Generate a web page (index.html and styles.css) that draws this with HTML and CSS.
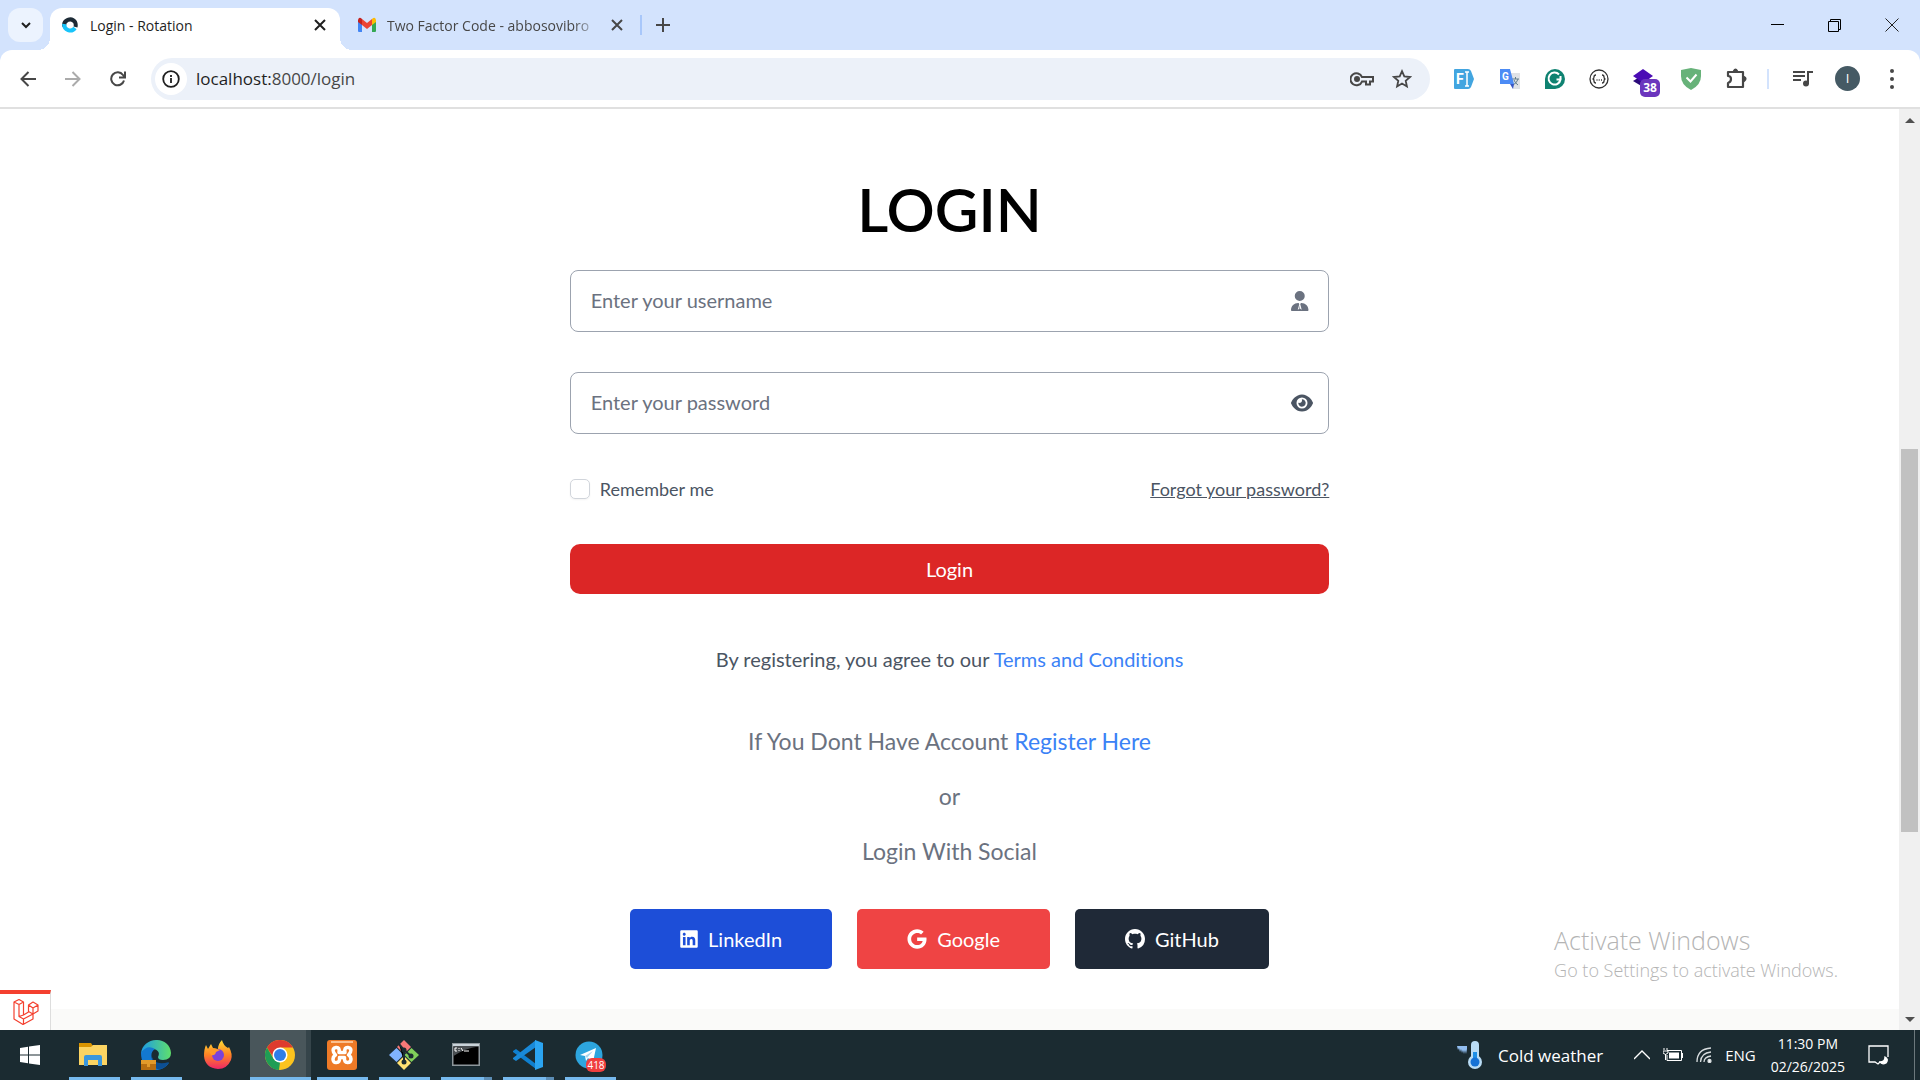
FILE: index.html
```
<!DOCTYPE html>
<html lang="en">
<head>
    <meta charset="UTF-8">
    <meta name="viewport" content="width=device-width, initial-scale=1.0">
    <title>Login - Rotation</title>
    <link rel="stylesheet" href="styles.css">
</head>
<body>
    <header class="browser">
        <div class="tab-strip">
            <button class="tab-search" aria-label="Search tabs">
                <svg width="12" height="12" viewBox="0 0 12 12" fill="none" stroke="#1f1f1f" stroke-width="2"><path d="M2 4l4 4 4-4"/></svg>
            </button>
            <div class="tab active">
                <svg width="16" height="16" viewBox="0 0 16 16" fill="none" stroke-width="4"><path d="M2.200 9.500A6 6 0 0 1 13 5c1 2 1 3 .5 5" stroke="#1d2b36"/><path d="M2.200 7A6 6 0 0 0 13 11" stroke="#18c4fa"/></svg>
                <span class="tab-title">Login - Rotation</span>
                <button class="tab-close" aria-label="Close tab">
                    <svg width="12" height="12" viewBox="0 0 12 12" stroke="#1f1f1f" stroke-width="2"><path d="M1 1l10 10M11 1L1 11"/></svg>
                </button>
            </div>
            <div class="tab">
                <svg width="20" height="16" viewBox="0 0 20 16"><path fill="#4285f4" d="M1 4v10q0 1 1 1h3V6z"/><path fill="#34a853" d="M15 6v9h3q1 0 1-1V4z"/><path fill="#ea4335" d="M5 2l5 4 5-4v6l-5 4-5-4z"/><path fill="#c5221f" d="M1 3q1-4 4-1v6L1 5z"/><path fill="#fbbc04" d="M19 3q-1-4-4-1v6l4-3z"/></svg>
                <span class="tab-title faded">Two Factor Code - abbosovibro</span>
                <button class="tab-close" aria-label="Close tab">
                    <svg width="12" height="12" viewBox="0 0 12 12" stroke="#474747" stroke-width="2"><path d="M1 1l10 10M11 1L1 11"/></svg>
                </button>
            </div>
            <span class="divider"></span>
            <button class="new-tab" aria-label="New tab">
                <svg width="14" height="14" viewBox="0 0 14 14" stroke="#474747" stroke-width="2"><path d="M7 0v14M0 7h14"/></svg>
            </button>
            <div class="window-controls">
                <button aria-label="Minimize"><svg width="13" height="14" viewBox="0 0 13 14" stroke="#000"><path d="M0 6.500h13"/></svg></button>
                <button aria-label="Restore"><svg width="14" height="14" viewBox="0 0 14 14" fill="none" stroke="#000"><path d="M.5 3.500h10v10H.5zM2.500 3.500v-2h10v10h-2"/></svg></button>
                <button aria-label="Close"><svg width="14" height="14" viewBox="0 0 14 14" stroke="#222"><path d="M.5.5l13 13M13.500.5l-13 13"/></svg></button>
            </div>
        </div>
        <div class="toolbar">
            <div class="nav-buttons">
                <button aria-label="Back"><svg width="16" height="16" viewBox="0 0 16 16" fill="none" stroke="#474747" stroke-width="2"><path d="M16 8H2M8.500 1L1.500 8l7 7"/></svg></button>
                <button aria-label="Forward"><svg width="16" height="16" viewBox="0 0 16 16" fill="none" stroke="#ababab" stroke-width="2"><path d="M0 8h14M7.500 1l7 7-7 7"/></svg></button>
                <button aria-label="Reload"><svg width="16" height="16" viewBox="0 0 16 16" fill="none" stroke="#474747" stroke-width="2"><path d="M14 9.500A6.500 6.500 0 1 1 13 4l1.500 2M15 .5v6H9"/></svg></button>
            </div>
            <div class="address-bar">
                <span class="site-info"><svg width="18" height="18" viewBox="0 0 18 18" fill="none" stroke="#1f1f1f" stroke-width="1.800"><circle cx="9" cy="9" r="7.800"/><path d="M9 8v5M9 5v2"/></svg></span>
                <p class="url">localhost:<span>8000/login</span></p>
                <svg width="24" height="16" viewBox="0 0 24 16" fill="none" stroke="#474747" stroke-width="2"><path d="M12 6a6 6 0 1 0 0 4.500h4v3h4v-3h3V6z"/><circle cx="7" cy="8" r="2" fill="#474747"/></svg>
                <svg width="20" height="20" viewBox="0 0 20 20" fill="none" stroke="#474747" stroke-width="1.800"><path d="M10 2.200l2.300 5.200 5.700.6-4.300 3.800 1.200 5.600-4.900-2.900-4.900 2.900 1.200-5.600L2 8l5.700-.6z"/></svg>
            </div>
            <div class="extensions">
                <svg width="22" height="22" viewBox="0 0 22 22"><path fill="#42a5e0" d="M2 1h13q2 0 3 2l3 8-3 8q-1 2-3 2H2q-1 0-1-1V2q0-1 1-1z"/><text x="3" y="16" class="glyph g14">F</text><path d="M12 4h4M12 18h4M14 4v14" stroke="#fff" stroke-width="1.500"/></svg>
                <svg width="22" height="22" viewBox="0 0 22 22"><path fill="#e0e2e6" d="M9 5h12v16H14z"/><path d="M13 11h7M16.500 9v2M19 11q-1 4-5 6M15 12q1 3 4 5" stroke="#607d8b" fill="none"/><path fill="#4c8bf5" d="M1 1h10l4 15H1z"/><path fill="#3a57c4" d="M11 16h4l-1 5z"/><text x="3" y="12" class="glyph g10">G</text></svg>
                <svg width="20" height="20" viewBox="0 0 20 20"><path fill="#0f8271" d="M10 0a10 10 0 1 1 0 20H0V10A10 10 0 0 1 10 0z"/><path d="M14 5.500a6 6 0 1 0 1.500 5h-4M15.500 7v3.500" fill="none" stroke="#fff" stroke-width="2"/></svg>
                <svg width="20" height="20" viewBox="0 0 20 20" fill="none" stroke="#333" stroke-width="1.300"><circle cx="10" cy="10" r="9"/><path d="M7 6q-2 0-2 2t-1.500 2q1.500 0 1.500 2t2 2M13 6q2 0 2 2t1.500 2q-1.500 0-1.500 2t-2 2M7.500 11h1M9.700 11h1M12 11h1"/></svg>
                <span class="badge-icon">
                    <svg width="20" height="20" viewBox="0 0 20 20"><path fill="#2b0a7a" d="M0 12l10-6 10 6-10 6z"/><path fill="#4b0cb5" d="M10 0l10 7-10 7L0 7z"/></svg>
                    <span class="badge">38</span>
                </span>
                <svg width="22" height="22" viewBox="0 0 22 22"><path fill="#67b279" d="M11 0q5 1 10 2v6q0 9-10 14Q1 17 1 8V2q5-1 10-2z"/><path d="M6.500 9.500l4 4 6-7" fill="none" stroke="#fff" stroke-width="2"/></svg>
                <svg width="22" height="22" viewBox="0 0 22 22" fill="none" stroke="#474747" stroke-width="2.200" stroke-linejoin="round"><path d="M2 4h15v15H2v-4q3-1 3-4T2 8z"/><path d="M8 3q1.500-3 3 0zM18 9q3 1.500 0 4z" fill="#474747"/></svg>
                <span class="divider"></span>
                <svg width="20" height="20" viewBox="0 0 20 20" fill="none" stroke="#474747" stroke-width="2"><path d="M0 3h12M0 7h12M0 11h8M15 15V3h5"/><circle cx="13" cy="14.500" r="2" fill="#474747"/></svg>
                <span class="avatar">I</span>
                <svg width="6" height="20" viewBox="0 0 6 20" fill="#474747"><circle cx="3" cy="2" r="2"/><circle cx="3" cy="10" r="2"/><circle cx="3" cy="18" r="2"/></svg>
            </div>
        </div>
    </header>

    <div class="viewport">
        <main class="page">
            <div class="login">
                <h1>LOGIN</h1>
                <form>
                    <div class="field">
                        <input type="text" id="username" placeholder="Enter your username" aria-label="Username">
                        <svg width="22" height="20" viewBox="0 0 448 512" preserveAspectRatio="xMinYMid" fill="#6b7280"><path d="M224 256A128 128 0 1 0 224 0a128 128 0 0 0 0 256zm-28 48-15 0C81 304 0 385 0 485c0 15 12 27 27 27h394c15 0 27-12 27-27 0-100-81-181-181-181h-14l-16 34 37 140-40-24-10-90-10 90-40 24 37-140z"/></svg>
                    </div>
                    <div class="field">
                        <input type="password" id="password" placeholder="Enter your password" aria-label="Password">
                        <svg width="22" height="20" viewBox="0 0 576 512" fill="#4b5563"><path d="M288 32c-80.800 0-145.500 36.800-192.600 80.600C48.600 156 17.300 208 2.500 243.700c-3.300 7.900-3.300 16.700 0 24.600C17.300 304 48.600 356 95.400 399.400 142.500 443.200 207.200 480 288 480s145.500-36.800 192.600-80.600c46.800-43.500 78.100-95.400 93-131.100 3.300-7.900 3.300-16.700 0-24.600-14.900-35.700-46.200-87.700-93-131.100C433.500 68.800 368.800 32 288 32zM144 256a144 144 0 1 1 288 0 144 144 0 1 1-288 0zm144-64c0 35.300-28.700 64-64 64-7.100 0-13.900-1.200-20.300-3.300-5.500-1.800-11.900 1.600-11.700 7.400.3 6.900 1.300 13.800 3.200 20.700 13.700 51.200 66.400 81.600 117.600 67.900s81.600-66.400 67.900-117.600c-11.100-41.500-47.800-69.400-88.600-71.100-5.800-.2-9.200 6.100-7.400 11.700 2.100 6.400 3.300 13.200 3.300 20.300z"/></svg>
                    </div>
                    <div class="options">
                        <label><input type="checkbox"> Remember me</label>
                        <a href="#">Forgot your password?</a>
                    </div>
                    <button type="button" class="submit">Login</button>
                </form>
                <p class="terms">By registering, you agree to our <a href="#">Terms and Conditions</a></p>
                <div class="alternatives">
                    <p>If You Dont Have Account <a href="#">Register Here</a></p>
                    <p>or</p>
                    <p>Login With Social</p>
                </div>
                <div class="social">
                    <a href="#" class="linkedin">
                        <svg width="18" height="20" viewBox="0 0 448 512" fill="#fff"><path d="M416 32H31.900C14.300 32 0 46.500 0 64.300v383.400C0 465.500 14.300 480 31.900 480H416c17.600 0 32-14.500 32-32.300V64.300c0-17.800-14.400-32.300-32-32.300zM135.400 416H69V202.200h66.500V416zm-33.200-243c-21.300 0-38.500-17.300-38.500-38.500S80.900 96 102.200 96c21.200 0 38.500 17.300 38.500 38.500 0 21.300-17.200 38.500-38.500 38.500zm282.100 243h-66.400V312c0-24.800-.5-56.700-34.500-56.700-34.600 0-39.900 27-39.900 54.900V416h-66.400V202.200h63.700v29.200h.9c8.900-16.800 30.600-34.500 62.900-34.500 67.200 0 79.700 44.300 79.700 101.900V416z"/></svg>
                        LinkedIn
                    </a>
                    <a href="#" class="google">
                        <svg width="20" height="20" viewBox="0 0 488 512" fill="#fff"><path d="M488 261.800C488 403.300 391.100 504 248 504 110.800 504 0 393.200 0 256S110.800 8 248 8c66.800 0 123 24.500 166.300 64.900l-67.500 64.900C258.500 52.600 94.300 116.600 94.300 256c0 86.500 69.100 156.600 153.700 156.600 98.200 0 135-70.400 140.800-106.900H248v-85.300h236.100c2.300 12.700 3.900 24.900 3.900 41.400z"/></svg>
                        Google
                    </a>
                    <a href="#" class="github">
                        <svg width="20" height="20" viewBox="0 0 16 16" fill="#fff"><path d="M8 0C3.580 0 0 3.580 0 8c0 3.540 2.290 6.530 5.470 7.590.4.070.55-.17.55-.38 0-.19-.01-.82-.01-1.490-2.010.37-2.530-.49-2.690-.94-.09-.23-.48-.94-.82-1.130-.28-.15-.68-.52-.01-.53.63-.01 1.080.58 1.230.82.72 1.210 1.870.87 2.330.66.07-.52.28-.87.51-1.070-1.780-.2-3.640-.89-3.640-3.950 0-.87.31-1.590.82-2.150-.08-.2-.36-1.020.08-2.120 0 0 .67-.21 2.200.82.64-.18 1.320-.27 2-.27s1.360.09 2 .27c1.530-1.040 2.200-.82 2.200-.82.44 1.100.16 1.920.08 2.120.51.56.82 1.270.82 2.150 0 3.070-1.870 3.750-3.650 3.950.29.25.54.73.54 1.480 0 1.070-.01 1.930-.01 2.200 0 .21.15.46.55.38A8.010 8.010 0 0 0 16 8c0-4.420-3.580-8-8-8z"/></svg>
                        GitHub
                    </a>
                </div>
            </div>
            <div class="page-footer"></div>
            <button class="debugbar" aria-label="Debugbar">
                <svg width="26" height="26" viewBox="0 0 26 26" fill="none" stroke="#f4402f" stroke-width="1.200" stroke-linejoin="round"><path d="M1 3l5-2.500L10.500 3v13l5-3V6L20 3l5 3v6l-5 3v5l-10 5.500L1 20zM1 3l5 2.500L10.500 3M6 5.500v12l4.500 2.500 9.500-5M6 17.500l4.500-1.500M10.500 20v5.500M15.500 6l4.500 3 5-3M20 9v6M15.500 12.500L20 15"/></svg>
            </button>
            <aside class="watermark">
                <p class="watermark-title">Activate Windows</p>
                <p>Go to Settings to activate Windows.</p>
            </aside>
        </main>
        <div class="scrollbar">
            <svg width="10" height="5" viewBox="0 0 10 5" fill="#505050"><path d="M0 5l5-5 5 5z"/></svg>
            <div class="track"><div class="thumb"></div></div>
            <svg width="10" height="5" viewBox="0 0 10 5" fill="#505050"><path d="M0 0l5 5 5-5z"/></svg>
        </div>
    </div>

    <footer class="taskbar">
        <div class="apps">
            <button class="app start" aria-label="Start"><svg width="20" height="20" viewBox="0 0 20 20" fill="#fff"><path d="M0 3l8-1.200V9.500H0zM9 1.600L20 0v9.500H9zM0 10.500h8v7.700L0 17zM9 10.500h11V20L9 18.400z"/></svg></button>
            <button class="app open" aria-label="File Explorer"><svg width="30" height="30" viewBox="0 0 30 30"><path fill="#d99400" d="M0 3h12l2 3v4H0z"/><path fill="#fcd462" d="M0 7h12l2-2h14v20H0z"/><path fill="#3b97dd" d="M5 26V17q0-2 2-2h14q2 0 2 2v9h-4v-6H9v6z"/></svg></button>
            <button class="app open" aria-label="Edge"><svg width="30" height="30" viewBox="0 0 30 30"><defs><linearGradient id="edge"><stop offset="0" stop-color="#1d9be6"/><stop offset="1" stop-color="#5fe06b"/></linearGradient></defs><path fill="url(#edge)" d="M0 14C1-4 29-5 30 13q0 7-8 7-5 0-5-3 3-6-4-8Q4 7 0 14z"/><path fill="#1379d0" d="M0 13q6-9 14-4-5 3-3 10 4 8 17 4-6 8-16 7Q0 27 0 13z"/><path fill="#0c4f94" d="M11 17q3 9 17 5-4 8-12 7-6-4-5-12z"/><path fill="#b86e11" d="M0 20h15v10H0z"/><path fill="#e39a2a" d="M0 20h15v4H0zM6 24h3v3H6z"/></svg></button>
            <button class="app" aria-label="Firefox"><svg width="30" height="30" viewBox="0 0 30 30"><defs><linearGradient id="fox" x2="0" y2="1"><stop offset="0" stop-color="#ffdd35"/><stop offset=".5" stop-color="#ff8424"/><stop offset="1" stop-color="#f02667"/></linearGradient></defs><path fill="url(#fox)" d="M3 5l2 4 3-5 2 4 5 1q0-5 4-9 1 5 6 8l1-1q4 7 2 13-4 9-13 9Q2 28 1 16 1 9 3 5z"/><circle cx="15" cy="15" r="6" fill="#7b42d9"/><path fill="#ff9a28" d="M5 9q5-2 12 1l-4 2q-1 4-5 3z"/></svg></button>
            <button class="app open current" aria-label="Chrome"><svg width="30" height="30" viewBox="0 0 30 30"><circle cx="15" cy="15" r="15" fill="#fcc31e"/><path fill="#de3b2e" d="M2 7.500A15 15 0 0 1 28 7.500H15l-6 11z"/><path fill="#1f9d55" d="M2 7.500l6.500 11.250L15 22.500 14 30A15 15 0 0 1 2 7.500z"/><circle cx="15" cy="15" r="7.500" fill="#fff"/><circle cx="15" cy="15" r="6" fill="#2f7de9"/></svg></button>
            <button class="app open" aria-label="XAMPP"><svg width="30" height="30" viewBox="0 0 30 30"><rect width="30" height="30" rx="3" fill="#ee7a27"/><path d="M4 2h22" stroke="#fbc08f" stroke-width="2"/><path fill="none" stroke="#fff" stroke-width="3.500" stroke-linejoin="round" d="M12 12.500Q13 7 9 7.500 5 8 6.500 12q1 2 2 3-2 1-2.500 4 0 4 3.500 3.500 3.500 0 3-5h5q-.5 5 3 5 3.500 0 3.500-3.500-.5-3-2.500-4 1-1 2-3 1.500-4-2.500-4.500-4-.5-3 5z"/></svg></button>
            <button class="app open" aria-label="Git Bash"><svg width="30" height="30" viewBox="0 0 30 30"><path fill="#f87878" d="M15 0l7 7-7 7-7-7z"/><path fill="#80b3ff" d="M7.500 8l7 7-7 7-7.500-7z"/><path fill="#80cf5a" d="M22.500 8l7.500 7-7.500 7-7-7z"/><path fill="#ffe173" d="M15 16l7 7-7 7-7-7z"/><path d="M10 4l5 6v12M15 10l7 6" stroke="#1b2b31" stroke-width="2"/><g fill="#1b2b31"><circle cx="15" cy="10" r="2.500"/><circle cx="15" cy="22" r="2.500"/><circle cx="22" cy="16" r="2.500"/></g></svg></button>
            <button class="app open multi" aria-label="Command Prompt"><svg width="30" height="30" viewBox="0 0 30 30"><path fill="#8d969b" d="M1 3h28v23H1z"/><path fill="#c9d3d9" d="M2 4h26v2H2z"/><path fill="#000" d="M2.500 6.500h25v18h-25z"/><path fill="#4a4f52" d="M2.500 6.500h25Q14 8 2.500 16z"/><path d="M6 8H4v3h2M8 8v1M8 10v1M10 8l2 3M13 11h5" stroke="#fff" fill="none"/></svg></button>
            <button class="app open multi" aria-label="Visual Studio Code"><svg width="30" height="30" viewBox="0 0 30 30"><path fill="#0f7fcf" d="M0 11l3-2 20 15v5L0 12z"/><path fill="#1989d8" d="M0 19l3 2L23 7V0L0 18z"/><path fill="#2ba4f1" d="M22 0l8 3v24l-8 3z"/></svg></button>
            <button class="app open" aria-label="Telegram"><span class="badge-icon"><svg width="30" height="30" viewBox="0 0 30 30"><circle cx="14" cy="15" r="13.500" fill="#2da5de"/><path fill="#fff" d="M5 15L21 8l-3 14-5-4-2 3-1-5z"/><path d="M10 16l8-5-6 7" fill="#a8d5ee"/></svg><span class="badge count">418</span></span></button>
        </div>
        <div class="tray">
            <div class="weather">
                <svg width="26" height="30" viewBox="0 0 26 30"><path fill="#91bdf0" d="M0 6h10v3l-1 5-1-4-1 4-1-4-1 3-1-4-1 3-1-4-1 2z"/><path d="M18 5v17" stroke="#b9dcf5" stroke-width="8" stroke-linecap="round"/><circle cx="18" cy="22" r="7" fill="#b9dcf5"/><path d="M18 12v10" stroke="#1d8fe8" stroke-width="4"/><circle cx="18" cy="22" r="4.500" fill="#1672d6"/></svg>
                <span>Cold weather</span>
            </div>
            <svg width="16" height="10" viewBox="0 0 16 10" fill="none" stroke="#fff" stroke-width="1.300"><path d="M0 9l8-8 8 8"/></svg>
            <svg width="20" height="14" viewBox="0 0 20 14"><path d="M4 2.500h14.500v10H4V7M19.500 5v5M1 0v2M4 0v2M0 3h5v2L2.500 6.500 0 5zM2.500 6v6" fill="none" stroke="#fff"/><path fill="#fff" d="M6 4.500h10v6H6z"/></svg>
            <svg width="16" height="16" viewBox="0 0 16 16" fill="none" stroke="#d7dcde" stroke-width="1.300"><path d="M1 15Q1 2 15 1M4.500 15Q5 6 15 5M8 15q0-5 7-6"/><circle cx="13.500" cy="14" r="1.500" fill="#fff"/></svg>
            <span class="language">ENG</span>
            <div class="clock"><time>11:30 PM</time><time>02/26/2025</time></div>
            <svg class="notifications" width="21" height="20" viewBox="0 0 21 20" fill="none" stroke="#fff" stroke-width="1.300"><path d="M12 17l-2 2-3-2H1V1h19v11"/><path fill="#fff" d="M17 12q4 2 1 6-4 2-6-1 5 0 5-5z"/></svg>
            <span class="show-desktop"></span>
        </div>
    </footer>
</body>
</html>
```
FILE: styles.css
```
:root {
    --tab-strip: #d3e3fd;
    --taskbar: #1b2b31;
    --underline: #76b9ed;
    --gray-400: #9ca3af;
    --gray-500: #6b7280;
    --gray-600: #4b5563;
    --blue: #3b82f6;
    --red: #dc2626;
}

* {
    margin: 0;
    padding: 0;
    box-sizing: border-box;
}

body {
    display: flex;
    flex-direction: column;
    height: 100vh;
    font-family: "Open Sans", "Noto Sans", sans-serif;
    color: #1f1f1f;
    background-color: #fff;
    overflow: hidden;
}

button {
    border: none;
    background: none;
    font: inherit;
    color: inherit;
}

svg {
    display: block;
    flex-shrink: 0;
}

/* Browser chrome */
.browser {
    background-color: var(--tab-strip);
}

.tab-strip {
    display: flex;
    align-items: center;
    height: 50px;
    padding-left: 8px;
}

.tab-search {
    display: grid;
    place-items: center;
    width: 35px;
    height: 34px;
    margin-right: 7px;
    border-radius: 12px;
    background-color: #ecf3fe;
}

.tab {
    display: flex;
    align-items: center;
    width: 300px;
    height: 42px;
    padding: 0 17px;
    font-size: 14px;
    color: #474747;
}

.tab.active {
    position: relative;
    align-self: flex-end;
    width: 290px;
    padding: 0 14px 8px 12px;
    border-radius: 12px 12px 0 0;
    background-color: #fff;
    color: #1f1f1f;
}

.tab.active::before,
.tab.active::after {
    content: "";
    position: absolute;
    bottom: 0;
    width: 12px;
    height: 12px;
}

.tab.active::before {
    right: 100%;
    background: radial-gradient(circle at 0 0, transparent 12px, #fff 12px);
}

.tab.active::after {
    left: 100%;
    background: radial-gradient(circle at 100% 0, transparent 12px, #fff 12px);
}

.tab-title {
    flex: 1;
    margin: 0 12px;
    white-space: nowrap;
}

.tab-title.faded {
    margin: 0 12px 0 10px;
    -webkit-mask-image: linear-gradient(90deg, #000 88%, transparent);
    mask-image: linear-gradient(90deg, #000 88%, transparent);
}

.divider {
    width: 2px;
    height: 20px;
    background-color: #a8c7fa;
}

.new-tab {
    margin-left: 14px;
}

.window-controls {
    display: flex;
    margin-left: auto;
}

.window-controls button {
    display: grid;
    place-items: center;
    width: 57px;
    height: 50px;
}

.toolbar {
    display: flex;
    align-items: center;
    height: 59px;
    border-bottom: 2px solid #e0e0e0;
    border-radius: 12px 12px 0 0;
    background-color: #fff;
}

.nav-buttons {
    display: flex;
    gap: 29px;
    padding: 0 25px 0 20px;
}

.address-bar {
    display: flex;
    flex: 1;
    align-items: center;
    gap: 18px;
    height: 42px;
    padding: 0 18px 0 4px;
    border-radius: 21px;
    background-color: #ecf1f9;
}

.site-info {
    display: grid;
    place-items: center;
    width: 32px;
    height: 32px;
    margin-right: -9px;
    border-radius: 50%;
    background-color: #fff;
}

.url {
    flex: 1;
    font-size: 17px;
}

.url span {
    color: #474747;
}

.extensions {
    display: flex;
    align-items: center;
    gap: 24px;
    padding: 0 25px 0 23px;
}

.extensions .divider {
    margin-left: -5px;
    background-color: var(--tab-strip);
}

.glyph {
    fill: #fff;
    font-family: Roboto, sans-serif;
    font-weight: bold;
}

.g14 {
    font-size: 14px;
}

.g10 {
    font-size: 10px;
}

.badge-icon {
    position: relative;
    margin-right: 3px;
}

.badge {
    position: absolute;
    top: 10px;
    left: 7px;
    width: 20px;
    border-radius: 5px;
    background-color: #6b35bd;
    color: #fff;
    font-size: 12px;
    font-weight: bold;
    line-height: 18px;
    text-align: center;
}

.avatar {
    width: 25px;
    margin: 0 5px 0 -2px;
    border-radius: 50%;
    background-color: #455a64;
    color: #fff;
    font-size: 13px;
    line-height: 25px;
    text-align: center;
}

/* Login page */
.viewport {
    display: flex;
    flex: 1;
    min-height: 0;
}

.page {
    position: relative;
    display: flex;
    flex: 1;
    flex-direction: column;
    font-family: Lato, sans-serif;
    font-variant-ligatures: none;
}

.login {
    flex: 1;
    width: 40%;
    margin: 0 auto;
    padding-top: 62px;
    color: var(--gray-600);
    font-size: 20px;
    line-height: 30px;
    text-align: center;
}

.login h1 {
    margin-bottom: 23px;
    color: #000;
    font-size: 60px;
    font-weight: 600;
    line-height: 76px;
}

.field {
    display: flex;
    align-items: center;
    height: 62px;
    margin-bottom: 40px;
    padding-right: 15px;
    border: 1px solid var(--gray-400);
    border-radius: 8px;
}

.field input {
    flex: 1;
    height: 60px;
    padding: 0 20px 2px;
    border: none;
    border-radius: 8px;
    outline: none;
    background: none;
    font: inherit;
}

.field input::placeholder {
    color: var(--gray-500);
}

.options {
    display: flex;
    align-items: center;
    justify-content: space-between;
    margin-bottom: 40px;
    font-size: 18px;
}

.options label {
    display: flex;
    align-items: center;
    gap: 10px;
}

.options input {
    appearance: none;
    width: 20px;
    height: 20px;
    border: 1px solid #d1d5db;
    border-radius: 5px;
    box-shadow: 0 1px 2px rgba(0, 0, 0, 0.05);
}

.options a {
    color: var(--gray-600);
}

.submit {
    width: 100%;
    height: 50px;
    border-radius: 10px;
    background-color: var(--red);
    color: #fff;
}

.terms {
    margin-top: 50px;
}

.terms a,
.alternatives a {
    color: var(--blue);
    text-decoration: none;
}

.alternatives {
    display: grid;
    gap: 20px;
    margin-top: 50px;
    color: var(--gray-500);
    font-size: 23px;
    line-height: 35px;
}

.social {
    display: flex;
    justify-content: center;
    gap: 25px;
    margin-top: 40px;
}

.social a {
    display: flex;
    align-items: center;
    gap: 10px;
    height: 60px;
    padding: 0 50px;
    border-radius: 5px;
    color: #fff;
    text-decoration: none;
}

.linkedin {
    background-color: #1d4ed8;
}

.google {
    background-color: #ef4444;
}

.github {
    background-color: #1f2937;
}

.page-footer {
    height: 21px;
    background-color: #fafaf9;
}

.debugbar {
    position: absolute;
    bottom: 0;
    left: 0;
    display: grid;
    place-items: center;
    width: 51px;
    height: 40px;
    padding-left: 2px;
    border-top: 4px solid #f4402f;
    border-right: 1px solid #ddd;
    background-color: #fff;
}

.watermark {
    position: absolute;
    right: 61px;
    bottom: 46px;
    color: #b4b4b4;
    font-family: "Open Sans", sans-serif;
    font-size: 18px;
    font-weight: 300;
    line-height: 28px;
}

.watermark-title {
    font-size: 25px;
    line-height: 32px;
}

.scrollbar {
    display: flex;
    flex-direction: column;
    align-items: center;
    width: 21px;
    padding: 9px 0 8px;
    background-color: #f0f0f0;
}

.track {
    flex: 1;
    width: 17px;
    padding-top: 326px;
}

.thumb {
    height: 383px;
    background-color: #c1c1c1;
}

/* Windows taskbar */
.taskbar {
    display: flex;
    justify-content: space-between;
    height: 50px;
    background-color: var(--taskbar);
    color: #fff;
}

.apps {
    display: flex;
    gap: 11px;
}

.app {
    display: grid;
    align-items: center;
    width: 51px;
    border-bottom: 3px solid transparent;
    padding: 3px 0 0 10px;
}

.app.start {
    width: 58px;
    padding-left: 20px;
}

.app.open {
    border-bottom-color: var(--underline);
}

.app.multi {
    border-image: linear-gradient(90deg, var(--underline) 80%, #5c8db5 80%) 3;
    border-width: 0 0 3px;
}

.app.current {
    width: 61px;
    margin: 0 -5px;
    padding-left: 15px;
    background: linear-gradient(90deg, #49565b 56px, #35444a 56px);
}

.app .badge-icon {
    margin: 0;
}

.badge.count {
    top: 18px;
    left: 11px;
    border-radius: 6px;
    background-color: #f03e3e;
    font-size: 10px;
    font-weight: normal;
    line-height: 14px;
}

.tray {
    display: flex;
    align-items: center;
    gap: 13px;
    font-size: 15px;
}

.weather {
    display: flex;
    align-items: center;
    gap: 15px;
    margin-right: 18px;
    font-size: 17px;
}

.clock {
    display: grid;
    margin-left: 2px;
    font-size: 14px;
    line-height: 23px;
    text-align: center;
}

.notifications {
    margin-left: 10px;
}

.show-desktop {
    height: 50px;
    width: 6px;
    margin-left: 12px;
    border-left: 1px solid #6c787c;
}
```
